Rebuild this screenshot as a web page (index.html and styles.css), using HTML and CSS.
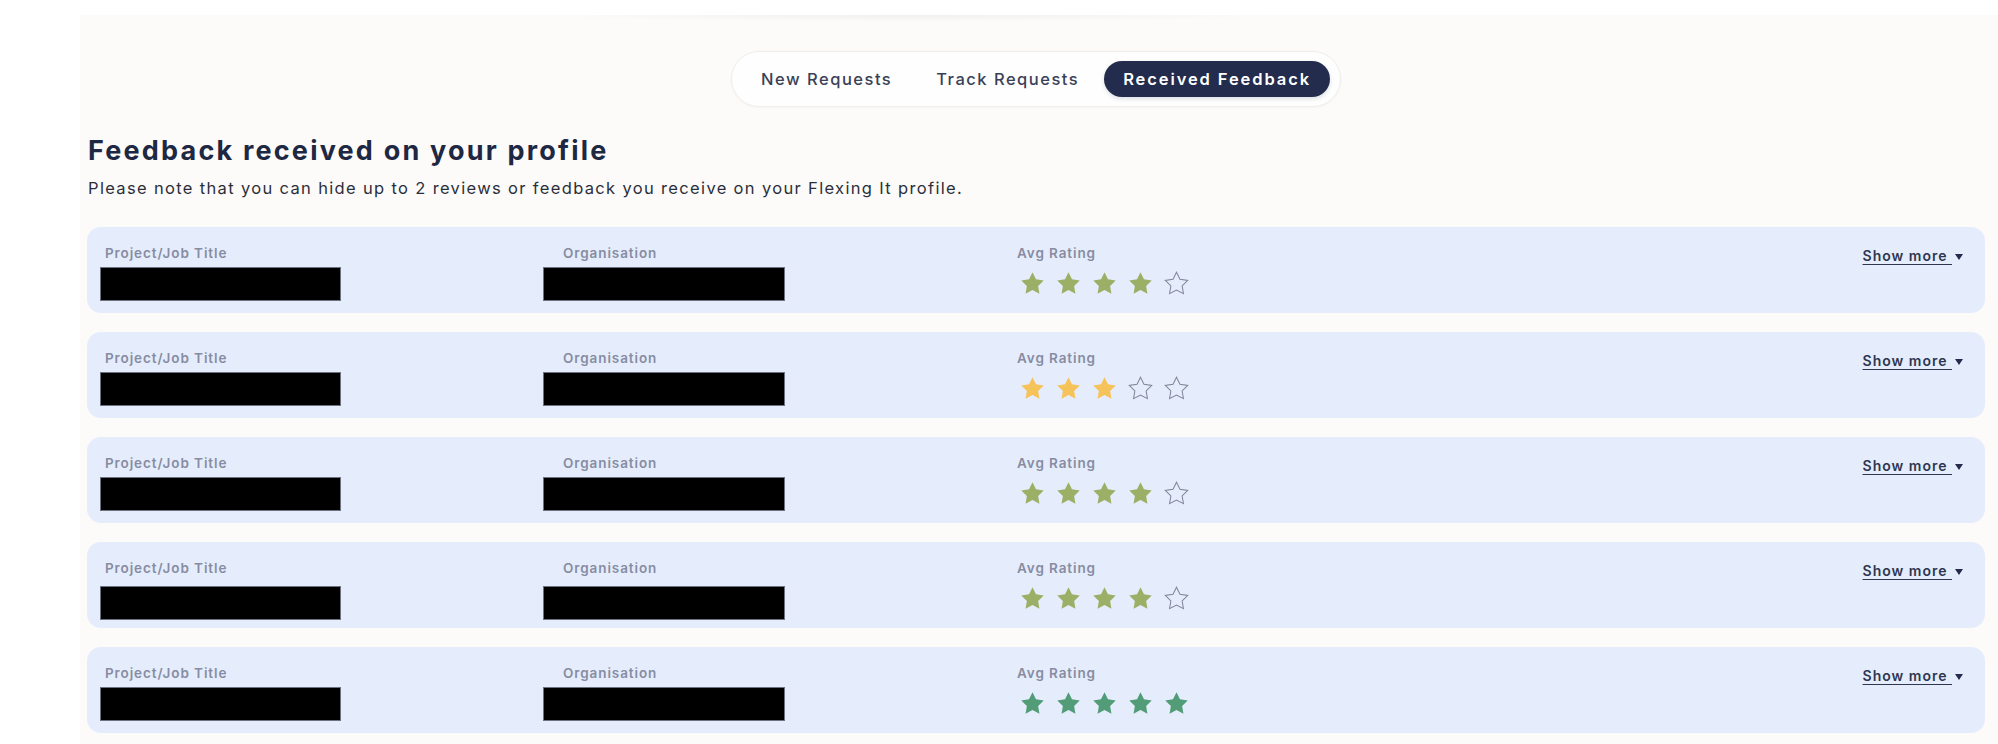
FILE: index.html
```html
<!DOCTYPE html>
<html lang="en">
<head>
<meta charset="utf-8">
<title>Received Feedback</title>
<link rel="stylesheet" href="styles.css">
</head>
<body>
<svg width="0" height="0" class="defs" aria-hidden="true">
  <defs>
    <path id="star" d="M12 2l3.09 6.26L22 9.27l-5 4.87 1.18 6.88L12 17.77l-6.18 3.25L7 14.14 2 9.27l6.91-1.01L12 2z"/>
  </defs>
</svg>
<main class="page">
  <div class="tabs-wrap">
    <nav class="tabs">
      <a class="tab">New Requests</a>
      <a class="tab">Track Requests</a>
      <a class="tab tab-active">Received Feedback</a>
    </nav>
  </div>

  <h1 class="title">Feedback received on your profile</h1>
  <p class="note">Please note that you can hide up to 2 reviews or feedback you receive on your Flexing It profile.</p>

  <section class="list">
    <article class="card">
      <div class="col col-project"><div class="label">Project/Job Title</div><div class="redact"></div></div>
      <div class="col col-org"><div class="label">Organisation</div><div class="redact"></div></div>
      <div class="col col-rating"><div class="label">Avg Rating</div>
        <div class="stars olive">
          <svg class="star"><use href="#star"/></svg><svg class="star"><use href="#star"/></svg><svg class="star"><use href="#star"/></svg><svg class="star"><use href="#star"/></svg><svg class="star empty"><use href="#star"/></svg>
        </div>
      </div>
      <div class="col col-more"><a class="more">Show more&nbsp;</a><span class="caret"></span></div>
    </article>

    <article class="card">
      <div class="col col-project"><div class="label">Project/Job Title</div><div class="redact"></div></div>
      <div class="col col-org"><div class="label">Organisation</div><div class="redact"></div></div>
      <div class="col col-rating"><div class="label">Avg Rating</div>
        <div class="stars gold">
          <svg class="star"><use href="#star"/></svg><svg class="star"><use href="#star"/></svg><svg class="star"><use href="#star"/></svg><svg class="star empty"><use href="#star"/></svg><svg class="star empty"><use href="#star"/></svg>
        </div>
      </div>
      <div class="col col-more"><a class="more">Show more&nbsp;</a><span class="caret"></span></div>
    </article>

    <article class="card">
      <div class="col col-project"><div class="label">Project/Job Title</div><div class="redact"></div></div>
      <div class="col col-org"><div class="label">Organisation</div><div class="redact"></div></div>
      <div class="col col-rating"><div class="label">Avg Rating</div>
        <div class="stars olive">
          <svg class="star"><use href="#star"/></svg><svg class="star"><use href="#star"/></svg><svg class="star"><use href="#star"/></svg><svg class="star"><use href="#star"/></svg><svg class="star empty"><use href="#star"/></svg>
        </div>
      </div>
      <div class="col col-more"><a class="more">Show more&nbsp;</a><span class="caret"></span></div>
    </article>

    <article class="card">
      <div class="col col-project"><div class="label">Project/Job Title</div><div class="redact redact-low"></div></div>
      <div class="col col-org"><div class="label">Organisation</div><div class="redact redact-low"></div></div>
      <div class="col col-rating"><div class="label">Avg Rating</div>
        <div class="stars olive">
          <svg class="star"><use href="#star"/></svg><svg class="star"><use href="#star"/></svg><svg class="star"><use href="#star"/></svg><svg class="star"><use href="#star"/></svg><svg class="star empty"><use href="#star"/></svg>
        </div>
      </div>
      <div class="col col-more"><a class="more">Show more&nbsp;</a><span class="caret"></span></div>
    </article>

    <article class="card">
      <div class="col col-project"><div class="label">Project/Job Title</div><div class="redact"></div></div>
      <div class="col col-org"><div class="label">Organisation</div><div class="redact"></div></div>
      <div class="col col-rating"><div class="label">Avg Rating</div>
        <div class="stars green">
          <svg class="star"><use href="#star"/></svg><svg class="star"><use href="#star"/></svg><svg class="star"><use href="#star"/></svg><svg class="star"><use href="#star"/></svg><svg class="star"><use href="#star"/></svg>
        </div>
      </div>
      <div class="col col-more"><a class="more">Show more&nbsp;</a><span class="caret"></span></div>
    </article>
  </section>
</main>
</body>
</html>
```

FILE: styles.css
```css
* { box-sizing: border-box; }

html, body {
  margin: 0;
  padding: 0;
  background: #ffffff;
  font-family: "Inter", "Open Sans", sans-serif;
  overflow: hidden;
}

.defs { position: absolute; width: 0; height: 0; }

.page {
  position: relative;
  margin: 15px 0 0 80px;
  padding: 36px 13px 20px 7px;
  background: #fcfbfa;
  min-height: 729px;
}

.page::before {
  content: "";
  position: absolute;
  top: 0;
  left: 455px;
  width: 755px;
  height: 7px;
  background: radial-gradient(ellipse at top, rgba(0,0,0,0.045), rgba(0,0,0,0) 70%);
}

.tabs-wrap {
  display: flex;
  justify-content: center;
}

.tabs {
  display: flex;
  align-items: center;
  gap: 6px;
  height: 56px;
  padding: 0 10px;
  background: #fefefe;
  border: 1px solid #efeeeb;
  border-radius: 28px;
  box-shadow: 0 1px 3px rgba(0,0,0,0.03);
}

.tab {
  display: flex;
  align-items: center;
  height: 36px;
  padding: 0 19px;
  border-radius: 18px;
  font-size: 16.5px;
  letter-spacing: 1.5px;
  font-weight: 500;
  color: #3a4156;
  white-space: nowrap;
}

.tab-active {
  background: #232c4d;
  color: #ffffff;
  font-weight: 600;
  letter-spacing: 1.9px;
  box-shadow: 0 2px 4px rgba(35,44,77,0.15);
}

.title {
  margin: 28px 0 0 1px;
  font-size: 27px;
  line-height: 32px;
  letter-spacing: 2.2px;
  font-weight: 700;
  color: #1e2843;
}

.note {
  margin: 10px 0 0 1px;
  font-size: 16.5px;
  line-height: 22px;
  letter-spacing: 1.34px;
  color: #2b2f3b;
}

.list {
  display: flex;
  flex-direction: column;
  gap: 19px;
  margin-top: 28px;
}

.card {
  display: grid;
  grid-template-columns: 458px 454px 1fr auto;
  height: 86px;
  padding: 17px 22px 0 18px;
  background: #e5edfc;
  border-radius: 14px;
}

.label {
  height: 18px;
  font-size: 13.5px;
  line-height: 18px;
  letter-spacing: 0.9px;
  font-weight: 600;
  color: #878ca2;
}

.redact {
  width: 241px;
  height: 34px;
  margin-top: 5px;
  background: #000;
  border: 1px solid #6d7180;
}
.col-project .redact { margin-left: -5px; }
.col-org .redact { margin-left: -20px; width: 242px; }
.redact-low { margin-top: 9px; }

.stars {
  display: flex;
  gap: 9px;
  margin: 8px 0 0 2px;
}

.star {
  width: 27px;
  height: 27px;
}
.star use { transform: scale(1.125); }

.olive .star { fill: #9bb066; }
.gold .star { fill: #f6c35b; }
.green .star { fill: #529c78; }
.stars .star.empty { fill: none; stroke: #80859a; stroke-width: 0.9; }

.col-more {
  display: flex;
  align-items: flex-start;
  padding-top: 3px;
}

.more {
  font-size: 14px;
  line-height: 18px;
  letter-spacing: 1px;
  font-weight: 600;
  color: #2f3650;
  text-decoration: underline;
  text-underline-offset: 3px;
}

.caret {
  width: 0;
  height: 0;
  margin: 7px 0 0 3px;
  border-left: 4px solid transparent;
  border-right: 4px solid transparent;
  border-top: 6px solid #232c4d;
}
```
